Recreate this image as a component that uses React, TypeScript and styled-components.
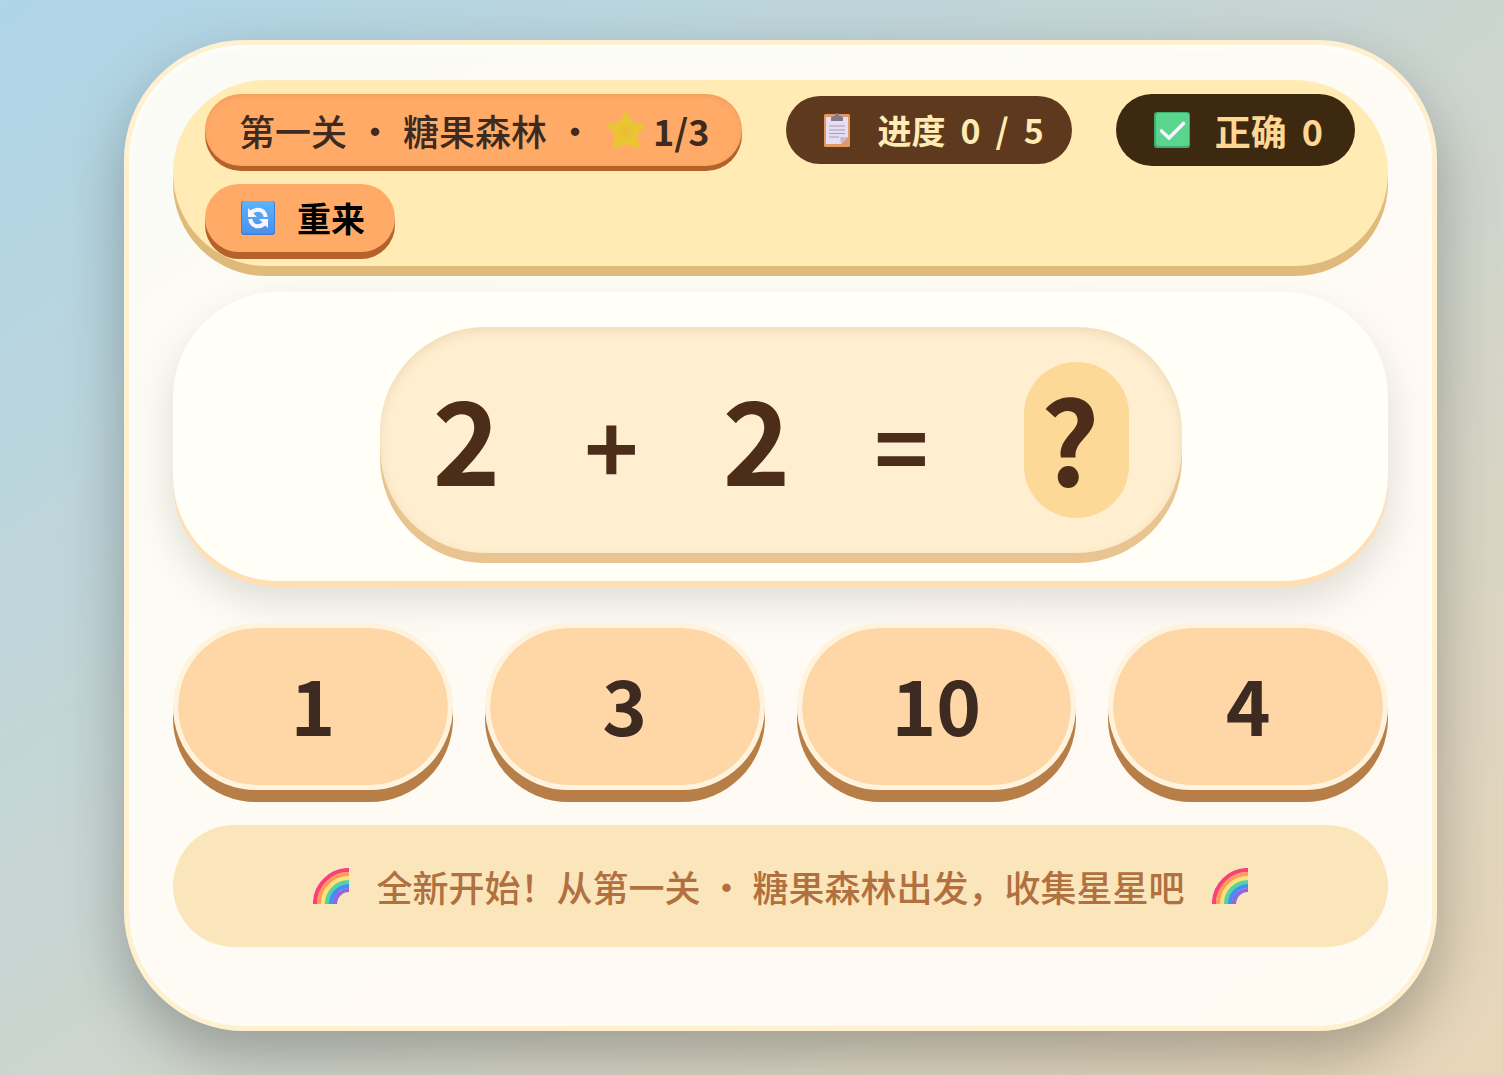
import React, { useState } from "react";
import styled, { createGlobalStyle, css } from "styled-components";

const Global = createGlobalStyle`
  * { box-sizing: border-box; }
  body {
    margin: 0;
    min-height: 100vh;
    color: #3d2a20;
    font-family: "Noto Sans CJK SC", "Noto Sans", sans-serif;
    background: linear-gradient(145deg, #aed5e8 0%, #e9d6b8 100%) no-repeat;
  }
  button { font: inherit; border: 0; cursor: pointer; }
`;

const Page = styled.main`
  min-height: 100vh;
  padding: 40px 66px 44px 124px;
`;

const Card = styled.section`
  display: flex;
  flex-direction: column;
  padding: 35px 44px 79px;
  border: 5px solid #fff0cf;
  border-radius: 120px;
  background: linear-gradient(145deg, #fafbf4 0%, #fdfcf4 40%, #fffaf4 60%, #fefbf3 100%);
  box-shadow: 0 25px 60px rgba(0, 0, 0, 0.27), inset 0 2px 8px #ffffff;
`;

const Header = styled.header`
  display: flex;
  flex-wrap: wrap;
  align-items: center;
  gap: 18px 44px;
  padding: 14px 32px;
  border-radius: 93px;
  background: #ffebb3;
  box-shadow: 0 10px 0 #dfba7b;
`;

const pill = css`
  display: flex;
  align-items: center;
  border-radius: 36px;
  white-space: nowrap;
`;

const Level = styled.div`
  ${pill}
  gap: 10px;
  padding: 0 33px 0 34px;
  font-size: 36px;
  font-weight: 500;
  line-height: 72px;
  background: #ffaa66;
  box-shadow: 0 5px 0 #b5622a, inset 0 2px 5px rgba(140, 70, 20, 0.12);
`;

const Stars = styled.strong`
  display: flex;
  align-items: center;
  gap: 8px;
  margin-left: 4px;
`;

const Stat = styled.div<{ $dark?: boolean }>`
  ${pill}
  gap: 15px;
  padding: 0 ${(p) => (p.$dark ? 32 : 28)}px 0 ${(p) => (p.$dark ? 38 : 36)}px;
  font-size: ${(p) => (p.$dark ? 36 : 34)}px;
  font-weight: 700;
  line-height: ${(p) => (p.$dark ? 72 : 68)}px;
  color: ${(p) => (p.$dark ? "#ffd794" : "#ffebb3")};
  background: ${(p) => (p.$dark ? "#3d2810" : "#5f391d")};
`;

const StatLabel = styled.span`
  margin-left: 10px;
`;

const Restart = styled.button`
  ${pill}
  gap: 22px;
  padding: 0 30px 0 36px;
  && {
    font-size: 34px;
    font-weight: 700;
    line-height: 68px;
  }
  color: #000;
  background: #ffaa66;
  box-shadow: 0 7px 0 #b5622a;
`;

const Question = styled.section`
  display: flex;
  justify-content: center;
  margin-top: 26px;
  padding: 35px 0 28px;
  border-radius: 105px;
  background: #fffff7;
  box-shadow: 0 6px 0 #ffdfb3, 0 20px 40px rgba(0, 0, 0, 0.13);
`;

const Equation = styled.div`
  display: flex;
  gap: 77px;
  padding: 35px 53px;
  border-radius: 105px;
  font-size: 115px;
  font-weight: 700;
  line-height: 148px;
  color: #4b2d1a;
  background: #ffefd0;
  box-shadow: 0 10px 0 #e8c490, inset 0 4px 12px rgba(150, 90, 30, 0.14);
`;

const Term = styled.span`
  width: 68px;
  text-align: center;
`;

const Operator = styled(Term)`
  padding-top: 8px;
  font-size: 92px;
`;

const Blank = styled.span`
  width: 105px;
  margin-left: 11px;
  padding: 0 12px 8px 0;
  border-radius: 52px;
  text-align: center;
  background: #fdd998;
`;

const Answers = styled.div`
  display: grid;
  grid-template-columns: repeat(4, 1fr);
  gap: 32px;
  margin-top: 42px;
`;

const Answer = styled.button`
  && {
    padding: 0 0 6px;
    border: 5px solid #fff3de;
    font-size: 76px;
    font-weight: 700;
    line-height: 151px;
  }
  border-radius: 84px;
  color: #3d2a20;
  background: #ffd6a5;
  background-clip: padding-box;
  box-shadow: 0 12px 0 #b87e47;
`;

const Message = styled.p`
  display: flex;
  align-items: center;
  justify-content: center;
  gap: 27px;
  margin: 35px 0 0;
  border-radius: 61px;
  font-size: 36px;
  font-weight: 500;
  line-height: 122px;
  color: #b07040;
  background: #fbe5bb;
`;

const StarIcon = () => (
  <svg width="38" height="38" viewBox="0 0 38 38" aria-hidden="true">
    <defs>
      <radialGradient id="star" cx="50%" cy="55%" r="55%">
        <stop offset="0" stopColor="#e5bd35" />
        <stop offset="0.7" stopColor="#eec832" />
        <stop offset="1" stopColor="#f6dc3c" />
      </radialGradient>
    </defs>
    <path d="M19 3.500 L23.500 13 L35 15 L27.500 23 L30 35 L19 31 L8 35 L10.500 23 L3 15 L14.500 13 Z" fill="url(#star)" stroke="#e9c536" strokeWidth="4.500" strokeLinejoin="round" />
  </svg>
);

const ClipboardIcon = () => (
  <svg width="30" height="34" viewBox="0 0 30 34" aria-hidden="true">
    <rect x="2" y="1" width="26" height="33" rx="1.500" fill="#e29a62" />
    <path d="M4 4 H26 V24 L19 31 H4 Z" fill="#e7def4" />
    <path d="M26 24 L19 31 L18 24 Z" fill="#c5bad9" />
    <path d="M9 8 V5 Q9 3 12 3 H13 Q13 0 15 0 Q17 0 17 3 H18 Q21 3 21 5 V8 Z" fill="#85798c" />
    <path d="M7 13 H23 M7 17 H23 M7 20.500 H23 M7 24 H17" stroke="#a79db3" strokeWidth="1.200" />
  </svg>
);

const CheckIcon = () => (
  <svg width="36" height="36" viewBox="0 0 36 36" aria-hidden="true">
    <rect width="36" height="36" rx="3" fill="#3fae75" />
    <rect x="2" y="1" width="33" height="33" rx="3" fill="#59d58e" />
    <path d="M7.500 19 L15 26 L29.500 11.500" fill="none" stroke="#f8f4fd" strokeWidth="3.600" strokeLinecap="round" strokeLinejoin="miter" />
  </svg>
);

const RestartIcon = () => (
  <svg width="34" height="34" viewBox="0 0 34 34" aria-hidden="true">
    <defs>
      <linearGradient id="blue" x1="0" y1="0" x2="0" y2="1">
        <stop offset="0" stopColor="#5ab4ff" />
        <stop offset="1" stopColor="#4d90ea" />
      </linearGradient>
    </defs>
    <rect width="34" height="34" rx="3" fill="#3f7fd6" />
    <rect x="1" y="0" width="32" height="32.500" rx="3" fill="url(#blue)" />
    <path d="M10 11.500 Q17 6.500 22 10.500 Q24.500 13 24.800 16" fill="none" stroke="#fbf5ff" strokeWidth="4" />
    <path d="M7 7 V16 H16 Z M27 27 V18 H18 Z" fill="#fbf5ff" />
    <path d="M24 22.500 Q17 27.500 12 23.500 Q9.500 21 9.200 18" fill="none" stroke="#fbf5ff" strokeWidth="4" />
  </svg>
);

const bands = ["#fa3f7c", "#ff9c55", "#ffdf7e", "#52d59c", "#418ef7", "#9168dc"];

const RainbowIcon = () => (
  <svg width="36" height="36" viewBox="0 0 36 36" aria-hidden="true">
    {bands.map((color, i) => {
      const r = 34 - i * 4;
      return <path key={color} d={`M${36 - r} 36 A${r} ${r} 0 0 1 36 ${36 - r}`} fill="none" stroke={color} strokeWidth="4.200" />;
    })}
  </svg>
);

const options = [1, 3, 10, 4];

export default function App() {
  const [picked, setPicked] = useState<number | null>(null);

  return (
    <>
      <Global />
      <Page>
        <Card>
          <Header>
            <Level>
              <span>第一关</span>
              <span>·</span>
              <span>糖果森林</span>
              <span>·</span>
              <Stars><StarIcon />1/3</Stars>
            </Level>
            <Stat>
              <ClipboardIcon />
              <StatLabel>进度</StatLabel>
              <span>0</span>
              <span>/</span>
              <span>5</span>
            </Stat>
            <Stat $dark>
              <CheckIcon />
              <StatLabel>正确</StatLabel>
              <span>0</span>
            </Stat>
            <Restart type="button" onClick={() => setPicked(null)}>
              <RestartIcon />
              重来
            </Restart>
          </Header>
          <Question>
            <Equation>
              <Term>2</Term>
              <Operator>+</Operator>
              <Term>2</Term>
              <Operator>=</Operator>
              <Blank>{picked ?? "?"}</Blank>
            </Equation>
          </Question>
          <Answers>
            {options.map((n) => (
              <Answer key={n} type="button" onClick={() => setPicked(n)}>{n}</Answer>
            ))}
          </Answers>
          <Message>
            <RainbowIcon />
            <span>全新开始！从第一关 · 糖果森林出发，收集星星吧</span>
            <RainbowIcon />
          </Message>
        </Card>
      </Page>
    </>
  );
}
